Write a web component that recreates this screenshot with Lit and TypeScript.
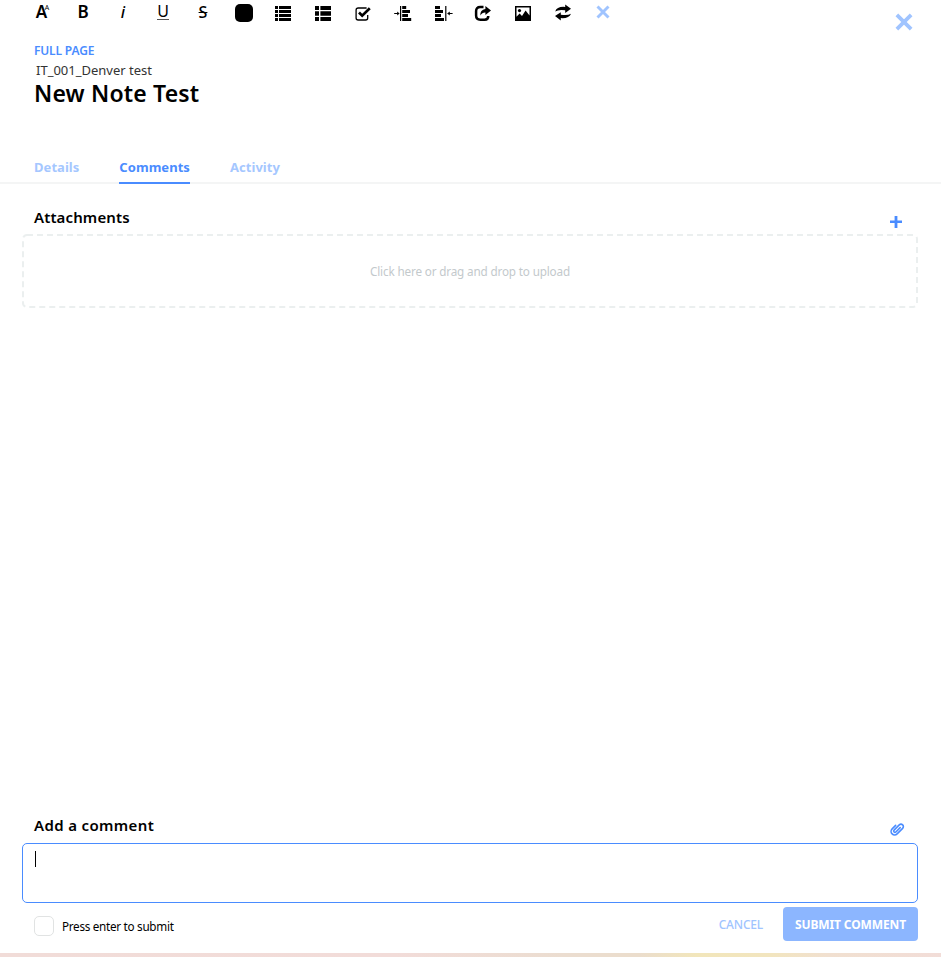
import { LitElement, html, css, svg } from "lit";
import { customElement, state } from "lit/decorators.js";
import { classMap } from "lit/directives/class-map.js";

const icon = (body: unknown, cls = "icon") =>
  html`<svg class=${cls} viewBox="0 0 20 20" aria-hidden="true">${body}</svg>`;

const cross = svg`<path d="M4.5 4.5 15.5 15.5M15.5 4.5 4.5 15.5" fill="none" stroke="currentColor" stroke-width="2.9"/>`;

const tools = [
  { name: "Font size", view: html`<span class="glyph size">A<sup>A</sup></span>` },
  { name: "Bold", view: html`<span class="glyph bold">B</span>` },
  { name: "Italic", view: html`<span class="glyph italic">i</span>` },
  { name: "Underline", view: html`<span class="glyph under">U</span>` },
  { name: "Strikethrough", view: html`<span class="glyph strike">S</span>` },
  { name: "Colour", view: html`<span class="swatch"></span>` },
  {
    name: "Bulleted list",
    view: icon(svg`<path d="M2 3h3v3H2zM6 3h12v3H6zM2 7h3v3H2zM6 7h12v3H6zM2 11h3v3H2zM6 11h12v3H6zM2 15h3v3H2zM6 15h12v3H6z"/>`),
  },
  {
    name: "Grid list",
    view: icon(svg`<path d="M2 3h4v4H2zM7.4 3H18v4H7.4zM2 8.3h4v4.4H2zM7.4 8.3H18v4.4H7.4zM2 14h4v4H2zM7.4 14H18v4H7.4z"/>`),
  },
  {
    name: "Checkbox",
    view: icon(svg`<path d="M13.6 5H5.2Q3.1 5 3.1 7v8q0 2 2.1 2h7.4q2.1 0 2.1-2v-3" fill="none" stroke="currentColor" stroke-width="1.3"/><path d="M6 9.5l3.2 3.2 7.6-7.4" fill="none" stroke="currentColor" stroke-width="2.7"/>`),
  },
  {
    name: "Indent",
    view: icon(svg`<path d="M7 3h1.2v15H7zM9.2 3h4v3h-4zM9.2 7H17v3H9.2zM9.2 11H15v3H9.2zM9.2 15h9v3h-9zM1.2 10h3V8.6l2.4 1.9-2.4 1.9V11h-3z"/>`),
  },
  {
    name: "Outdent",
    view: icon(svg`<path d="M12.2 3h1.2v15h-1.2zM2 3h5v3H2zM2 7h8v3H2zM2 11h6v3H2zM2 15h9v3H2zM19.6 10h-2.8V8.6l-2.7 1.9 2.7 1.9V11h2.8z"/>`),
  },
  {
    name: "Share",
    view: icon(svg`<path d="M10.5 4.1H7.2Q3.1 4.1 3.1 8v4.5q0 4.2 4.2 4.2h4.4q3.6 0 3.6-3.7" fill="none" stroke="currentColor" stroke-width="2.5"/><path d="M12.4 3 18 7.6l-5.6 4.5V9.4q-3.2-.2-5.1 3.2Q7 6.8 12.4 6z"/>`),
  },
  {
    name: "Image",
    view: icon(svg`<path fill-rule="evenodd" d="M2 3h16v15H2zM3.5 4.6v9.2l3.1-3.4 2.4 2.6 3.6-5.5 3.9 5V4.6z"/><circle cx="6.5" cy="7.6" r="1.6"/>`),
  },
  {
    name: "Refresh",
    view: icon(svg`<path d="M2.2 8.4Q4 3.2 12.2 3.9V1.6L18 5.8 12.200 10V7.2Q5.5 6.200 2.2 8.4zM18 10.700q-2 5-10.2 4.400v2.300L2 13.100l5.8-3.800v2.400q6.8 1.200 10.200-1z"/>`),
  },
  { name: "Dismiss", view: icon(cross, "icon pale") },
];

@customElement("app-root")
export class AppRoot extends LitElement {
  @state() private tab = "Comments";

  static styles = css`
    :host {
      display: flex;
      flex-direction: column;
      height: 957px;
      overflow: hidden;
      box-sizing: border-box;
      background: #fff;
      color: #000;
      font-family: "Noto Sans", "Open Sans", sans-serif;
      font-size: 12px;
    }
    header { display: flex; justify-content: space-between; height: 42px; padding: 0 24px 0 23px; }
    .tools { display: flex; height: 26px; }
    .tool { width: 40px; height: 26px; display: flex; align-items: center; justify-content: center; }
    .icon { width: 20px; height: 20px; fill: currentColor; display: block; }
    .pale { color: #a0c4ff; margin-top: -2px; }
    .close { width: 26px; height: 26px; margin-top: 9px; color: #a0c4ff; }
    .glyph { font: 17px/24px "Noto Sans", sans-serif; margin-top: -2px; }
    .size { position: relative; font-weight: 600; margin-left: -3px; }
    .size sup { position: absolute; left: 9px; top: -4px; font-size: 7px; font-weight: 400; }
    .bold { font-weight: 600; }
    .italic { font-style: italic; font-weight: 500; font-size: 16px; }
    .under { font-size: 16px; line-height: 16px; height: 17px; width: 12px; text-align: center; border-bottom: 1px solid #555; box-sizing: border-box; margin-top: -4px; }
    .strike { font-weight: 500; font-size: 16px; text-decoration: line-through; text-decoration-thickness: 1px; }
    .swatch { width: 18px; height: 18px; border-radius: 5px; background: #000; margin-left: 1px; }

    .title { display: flex; flex-direction: column; align-items: flex-start; height: 108px; padding-left: 34px; }
    .full { font-weight: 600; font-size: 12px; line-height: 17px; letter-spacing: -0.16px; color: #4a8cff; white-space: nowrap; }
    .project { font-size: 13px; line-height: 20px; margin: 1px 0 0 2px; color: #333; white-space: nowrap; }
    h1 { margin: -1px 0 0; font-size: 23px; line-height: 28px; font-weight: 650; letter-spacing: 0.17px; white-space: nowrap; }

    nav { display: flex; gap: 40px; height: 34px; box-sizing: border-box; padding-left: 34px; box-shadow: inset 0 -2px #f4f5f5; }
    .tab { height: 34px; box-sizing: border-box; padding-top: 8px; font-size: 13px; line-height: 18px; font-weight: 700; letter-spacing: 0.05px; color: #a5c7ff; white-space: nowrap; }
    .tab.on { color: #4a8cff; border-bottom: 2px solid #4a8cff; }

    main { flex: 1; display: flex; flex-direction: column; padding: 0 23px 0 22px; }
    h2 { margin: 0; font-size: 15px; line-height: 22px; font-weight: 600; letter-spacing: 0.12px; white-space: nowrap; }
    .comment h2 { letter-spacing: 0.36px; }
    .head { display: flex; justify-content: space-between; align-items: flex-start; padding: 0 12px; }
    .attach { height: 28px; margin-top: 22px; }
    .plus { width: 20px; height: 20px; margin: 6px 0 0 0; color: #4a8cff; }
    .drop { display: block; width: 896px; height: 74px; }
    .zone { display: grid; }
    .zone > * { grid-area: 1 / 1; }
    .zone span { place-self: center; color: #c3c9cc; font-size: 11.7px; letter-spacing: -0.15px; white-space: nowrap; }
    .comment { height: 29px; margin-top: auto; }
    .clip { width: 16px; height: 16px; margin: 7px 1px 0 0; color: #4a8cff; }
    .field { height: 60px; box-sizing: border-box; border: 1px solid #4a8cff; border-radius: 5px; padding: 7px 12px; }
    .caret { width: 1px; height: 16px; background: #000; }
    .actions { display: flex; align-items: center; height: 50px; box-sizing: border-box; padding: 0 0 8px 12px; }
    .box { width: 20px; height: 20px; box-sizing: border-box; border: 1px solid #e1e3e3; border-radius: 5px; margin-top: 4px; }
    .enter { margin: 4px auto 0 8px; font-size: 11.7px; line-height: 16px; letter-spacing: -0.28px; white-space: nowrap; }
    .cancel { color: #a0c4ff; font-size: 12px; font-weight: 500; letter-spacing: -0.2px; margin: 1px 20px 0 0; white-space: nowrap; }
    .submit { width: 135px; height: 34px; border-radius: 4px; background: #8cb6ff; color: #fff; font-size: 12px; line-height: 35px; font-weight: 700; letter-spacing: -0.12px; text-align: center; white-space: nowrap; }
    .strip { height: 4px; background: linear-gradient(90deg, #f1dcd8, #f2dcd9 42%, #ebddd0 60%, #ebddcc 68%, #f2e6bb 74%, #f2e5bf 82%, #f1e0d0 88%, #f2ddd8); }
  `;

  render() {
    return html`
      <header>
        <div class="tools">
          ${tools.map((t) => html`<div class="tool" title=${t.name}>${t.view}</div>`)}
        </div>
        ${icon(cross, "close")}
      </header>
      <section class="title">
        <div class="full">FULL PAGE</div>
        <div class="project">IT_001_Denver test</div>
        <h1>New Note Test</h1>
      </section>
      <nav>
        ${["Details", "Comments", "Activity"].map(
          (t) => html`<div class=${classMap({ tab: true, on: t === this.tab })} @click=${() => (this.tab = t)}>${t}</div>`
        )}
      </nav>
      <main>
        <div class="head attach">
          <h2>Attachments</h2>
          ${icon(svg`<path fill="currentColor" d="M8.6 4h2.8v4.4H16v2.7h-4.6V16H8.6v-4.9H4V8.4h4.6z"/>`, "plus")}
        </div>
        <div class="zone">
          <svg class="drop" viewBox="0 0 896 74">
            <rect x="1" y="1" width="894" height="72" rx="4" fill="none" stroke="#ebefef" stroke-width="2" stroke-dasharray="6 4"/>
          </svg>
          <span>Click here or drag and drop to upload</span>
        </div>
        <div class="head comment">
          <h2>Add a comment</h2>
          ${icon(svg`<g transform="rotate(45 10 10)" fill="none" stroke="currentColor" stroke-width="2" stroke-linecap="round"><path d="M5.6 8v6.2a4.4 4.4 0 0 0 8.8 0V4.4a3 3 0 0 0-6 0v9.2a1.6 1.6 0 0 0 3.2 0V6"/></g>`, "clip")}
        </div>
        <div class="field"><div class="caret"></div></div>
        <div class="actions">
          <div class="box"></div>
          <div class="enter">Press enter to submit</div>
          <div class="cancel">CANCEL</div>
          <div class="submit">SUBMIT COMMENT</div>
        </div>
      </main>
      <div class="strip"></div>
    `;
  }
}
